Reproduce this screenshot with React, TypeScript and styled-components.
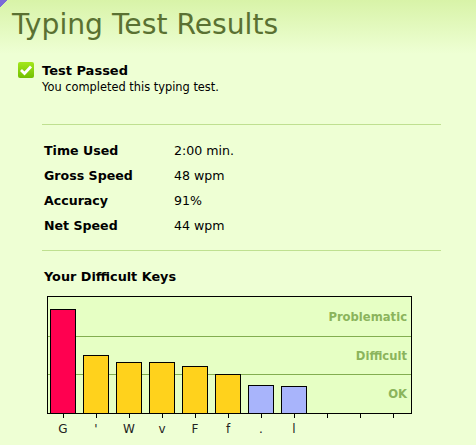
import styled, { createGlobalStyle } from 'styled-components';

const GlobalStyle = createGlobalStyle`
  html, body {
    margin: 0;
    padding: 0;
  }
  body {
    width: 476px;
    height: 445px;
    overflow: hidden;
    background: #eeffd4;
    font-family: "DejaVu Sans", Verdana, sans-serif;
    color: #000;
  }
`;

const Page = styled.div`
  width: 476px;
  height: 445px;
  overflow: hidden;
  background:
    linear-gradient(to bottom right, #7a6ad8 50%, transparent 50%) 0 0 / 8px 7px no-repeat,
    linear-gradient(#d8f3a8 0, #eeffd4 54px);
`;

const Title = styled.h1`
  margin: 0;
  padding: 7px 0 0 12px;
  height: 52px;
  box-sizing: border-box;
  font-size: 28.2px;
  line-height: 36px;
  font-weight: 400;
  color: #5a7132;
`;

const Status = styled.div`
  display: flex;
  gap: 8px;
  padding: 10px 0 0 18px;
`;

const CheckBox = styled.div`
  width: 16px;
  height: 16px;
  border-radius: 2px;
  background: linear-gradient(#a4e81c, #72c000);
  display: flex;
  align-items: center;
  justify-content: center;
`;

const StatusTitle = styled.div`
  font-size: 13px;
  line-height: 18px;
  font-weight: 700;
`;

const StatusText = styled.div`
  font-size: 11.4px;
  line-height: 14px;
`;

const Divider = styled.hr<{ $gap?: number }>`
  margin: ${({ $gap }) => $gap ?? 0}px 35px 0 42px;
  border: 0;
  height: 1px;
  background: #bfe090;
`;

const Stats = styled.div`
  padding: 13px 0 12px 44px;
  font-size: 12.6px;
`;

const StatRow = styled.div`
  display: grid;
  grid-template-columns: 130px 1fr;
  height: 25px;
  align-items: center;
`;

const StatLabel = styled.div`
  font-weight: 700;
`;

const StatValue = styled.div``;

const ChartTitle = styled.h2`
  margin: 18px 0 0 44px;
  font-size: 12.8px;
  line-height: 16px;
  font-weight: 700;
`;

const Chart = styled.div`
  margin: 11px 0 0 47px;
  width: 365px;
  height: 118px;
  box-sizing: border-box;
  border: 1px solid #000;
  background: #e6ffc4;
  display: grid;
`;

const Bands = styled.div`
  grid-area: 1 / 1;
  display: flex;
  flex-direction: column;
`;

const Band = styled.div<{ $height: number; $last?: boolean }>`
  height: ${({ $height }) => $height}px;
  box-sizing: border-box;
  border-bottom: ${({ $last }) => ($last ? '0' : '1px solid #83ae50')};
  padding-right: 4px;
  display: flex;
  align-items: center;
  justify-content: flex-end;
  font-size: 11.6px;
  font-weight: 700;
  color: #8bb45c;
`;

const Bars = styled.div`
  grid-area: 1 / 1;
  padding-left: 2px;
  display: flex;
  align-items: flex-end;
  gap: 7px;
`;

const Bar = styled.div<{ $color: string }>`
  width: 26px;
  box-sizing: border-box;
  border: 1px solid #000;
  border-bottom: 0;
  background: ${({ $color }) => $color};
`;

const Axis = styled.div`
  margin-left: 50px;
  display: flex;
  gap: 7px;
`;

const Tick = styled.div`
  width: 26px;
  text-align: center;
  font-size: 12px;
  line-height: 14px;
  color: #222;

  &::before {
    content: '';
    display: block;
    width: 1px;
    height: 4px;
    margin: 0 auto 4px;
    background: #000;
  }
`;

const RED = '#ff0050';
const YELLOW = '#ffd21c';
const BLUE = '#a8b4fb';

const STATS = [
  ['Time Used', '2:00 min.'],
  ['Gross Speed', '48 wpm'],
  ['Accuracy', '91%'],
  ['Net Speed', '44 wpm'],
];

const KEYS = [
  { key: 'G', height: 104, color: RED },
  { key: "'", height: 58, color: YELLOW },
  { key: 'W', height: 51, color: YELLOW },
  { key: 'v', height: 51, color: YELLOW },
  { key: 'F', height: 47, color: YELLOW },
  { key: 'f', height: 39, color: YELLOW },
  { key: '.', height: 28, color: BLUE },
  { key: 'l', height: 27, color: BLUE },
  { key: '', height: 0, color: BLUE },
  { key: '', height: 0, color: BLUE },
  { key: '', height: 0, color: BLUE },
];

export default function App() {
  return (
    <Page>
      <GlobalStyle />
      <Title>Typing Test Results</Title>
      <Status>
        <CheckBox>
          <svg width="14" height="12" viewBox="0 0 14 12">
            <path d="M2 6 L5.5 9.5 L12 2.5" fill="none" stroke="#fff" strokeWidth="2.8" />
          </svg>
        </CheckBox>
        <div>
          <StatusTitle>Test Passed</StatusTitle>
          <StatusText>You completed this typing test.</StatusText>
        </div>
      </Status>
      <Divider $gap={30} />
      <Stats>
        {STATS.map(([label, value]) => (
          <StatRow key={label}>
            <StatLabel>{label}</StatLabel>
            <StatValue>{value}</StatValue>
          </StatRow>
        ))}
      </Stats>
      <Divider />
      <ChartTitle>Your Difficult Keys</ChartTitle>
      <Chart>
        <Bands>
          <Band $height={40}>Problematic</Band>
          <Band $height={38}>Difficult</Band>
          <Band $height={38} $last>OK</Band>
        </Bands>
        <Bars>
          {KEYS.filter((k) => k.height > 0).map((k) => (
            <Bar key={k.key} $color={k.color} style={{ height: k.height }} />
          ))}
        </Bars>
      </Chart>
      <Axis>
        {KEYS.map((k, i) => (
          <Tick key={i}>{k.key}</Tick>
        ))}
      </Axis>
    </Page>
  );
}
